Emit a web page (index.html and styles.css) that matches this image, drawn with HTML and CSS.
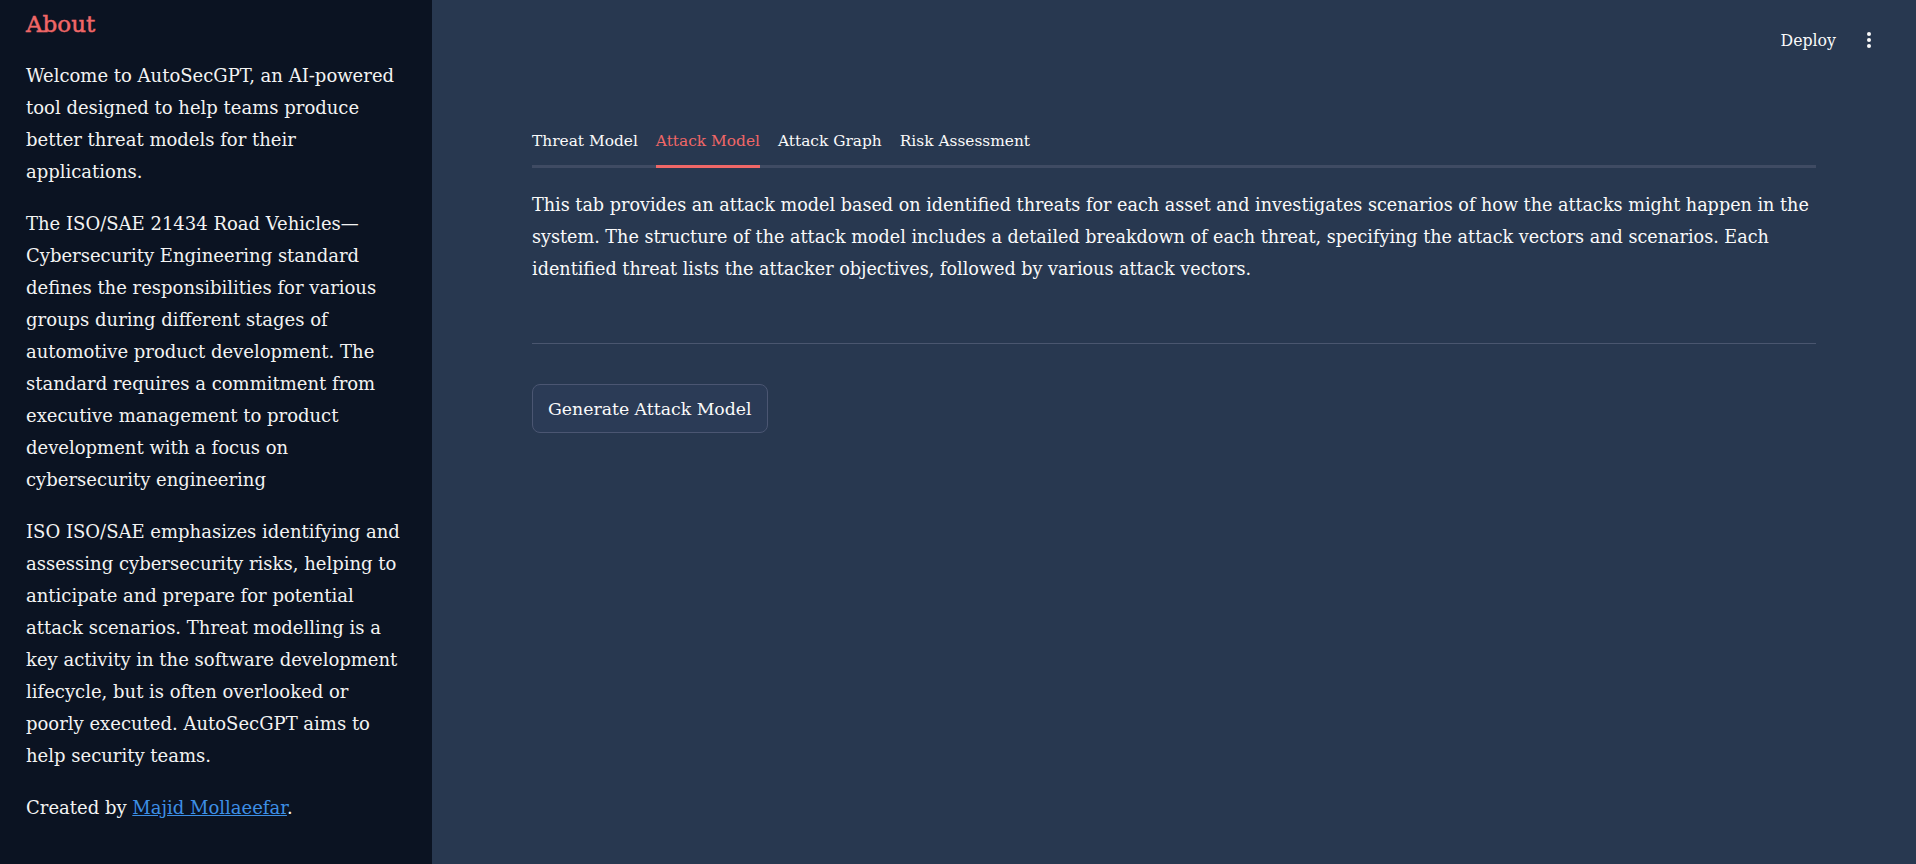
FILE: index.html
```
<!DOCTYPE html>
<html lang="en">
<head>
<meta charset="utf-8">
<title>AutoSecGPT</title>
<link rel="stylesheet" href="styles.css">
</head>
<body>
<div class="app">
  <aside class="sidebar">
    <h2 class="side-title">About</h2>
    <p class="side-text">Welcome to AutoSecGPT, an AI-powered tool designed to help teams produce better threat models for their applications.</p>
    <p class="side-text">The ISO/SAE 21434 Road Vehicles—Cybersecurity Engineering standard defines the responsibilities for various groups during different stages of automotive product development. The standard requires a commitment from executive management to product development with a focus on cybersecurity engineering</p>
    <p class="side-text">ISO ISO/SAE emphasizes identifying and assessing cybersecurity risks, helping to anticipate and prepare for potential attack scenarios. Threat modelling is a key activity in the software development lifecycle, but is often overlooked or poorly executed. AutoSecGPT aims to help security teams.</p>
    <p class="side-text">Created by <a class="link" href="#">Majid Mollaeefar</a>.</p>
  </aside>
  <main class="main">
    <header class="toolbar">
      <span class="deploy">Deploy</span>
      <span class="kebab"><i></i><i></i><i></i></span>
    </header>
    <section class="content">
      <nav class="tabs">
        <span class="tab">Threat Model</span>
        <span class="tab active">Attack Model</span>
        <span class="tab">Attack Graph</span>
        <span class="tab">Risk Assessment</span>
      </nav>
      <div class="panel">
        <p class="body-text">This tab provides an attack model based on identified threats for each asset and investigates scenarios of how the attacks might happen in the system. The structure of the attack model includes a detailed breakdown of each threat, specifying the attack vectors and scenarios. Each identified threat lists the attacker objectives, followed by various attack vectors.</p>
        <hr class="divider">
        <button class="btn">Generate Attack Model</button>
      </div>
    </section>
  </main>
</div>
</body>
</html>
```

FILE: styles.css
```
* { box-sizing: border-box; }
html, body { margin: 0; padding: 0; height: 100%; }
body {
  font-family: "DejaVu Serif", "Liberation Serif", serif;
  color: #fafafa;
  background: #283850;
  overflow: hidden;
}
.app {
  display: flex;
  height: 864px;
}
.sidebar {
  width: 432px;
  flex: 0 0 432px;
  background: #0b1322;
  padding: 10px 26px 0 26px;
}
.side-title {
  margin: 0 0 21px 0;
  font-size: 23px;
  line-height: 29px;
  font-weight: normal;
  color: #f06767;
  -webkit-text-stroke: 0.5px #f06767;
}
.side-text {
  margin: 0 0 20px 0;
  font-size: 18px;
  line-height: 32px;
  color: #f3f3f3;
}
.link { color: #3d8fe6; }
.main {
  flex: 1;
  display: flex;
  flex-direction: column;
}
.toolbar {
  height: 80px;
  display: flex;
  align-items: center;
  justify-content: flex-end;
  padding-right: 45px;
  gap: 31px;
}
.deploy { font-size: 15.75px; }
.kebab {
  display: flex;
  flex-direction: column;
  gap: 2px;
}
.kebab i {
  display: block;
  width: 4px;
  height: 4px;
  border-radius: 50%;
  background: #fafafa;
}
.content {
  padding: 49px 100px 0 100px;
}
.tabs {
  display: flex;
  gap: 18px;
  border-bottom: 3px solid #3f4b63;
}
.tab {
  font-size: 15.4px;
  line-height: 24px;
  padding-bottom: 12px;
  margin-bottom: -3px;
  border-bottom: 3px solid transparent;
}
.tab.active {
  color: #f06767;
  border-bottom-color: #f06767;
}
.panel { padding-top: 21px; }
.body-text {
  margin: 0;
  font-size: 17.6px;
  line-height: 32px;
}
.divider {
  margin: 58px 0 40px 0;
  border: 0;
  border-top: 1px solid #4a566f;
  height: 0;
}
.btn {
  font-family: inherit;
  font-size: 17.3px;
  color: #fafafa;
  background: #2b3b56;
  border: 1px solid #4b5672;
  border-radius: 8px;
  height: 49px;
  padding: 0 15px;
}
```
